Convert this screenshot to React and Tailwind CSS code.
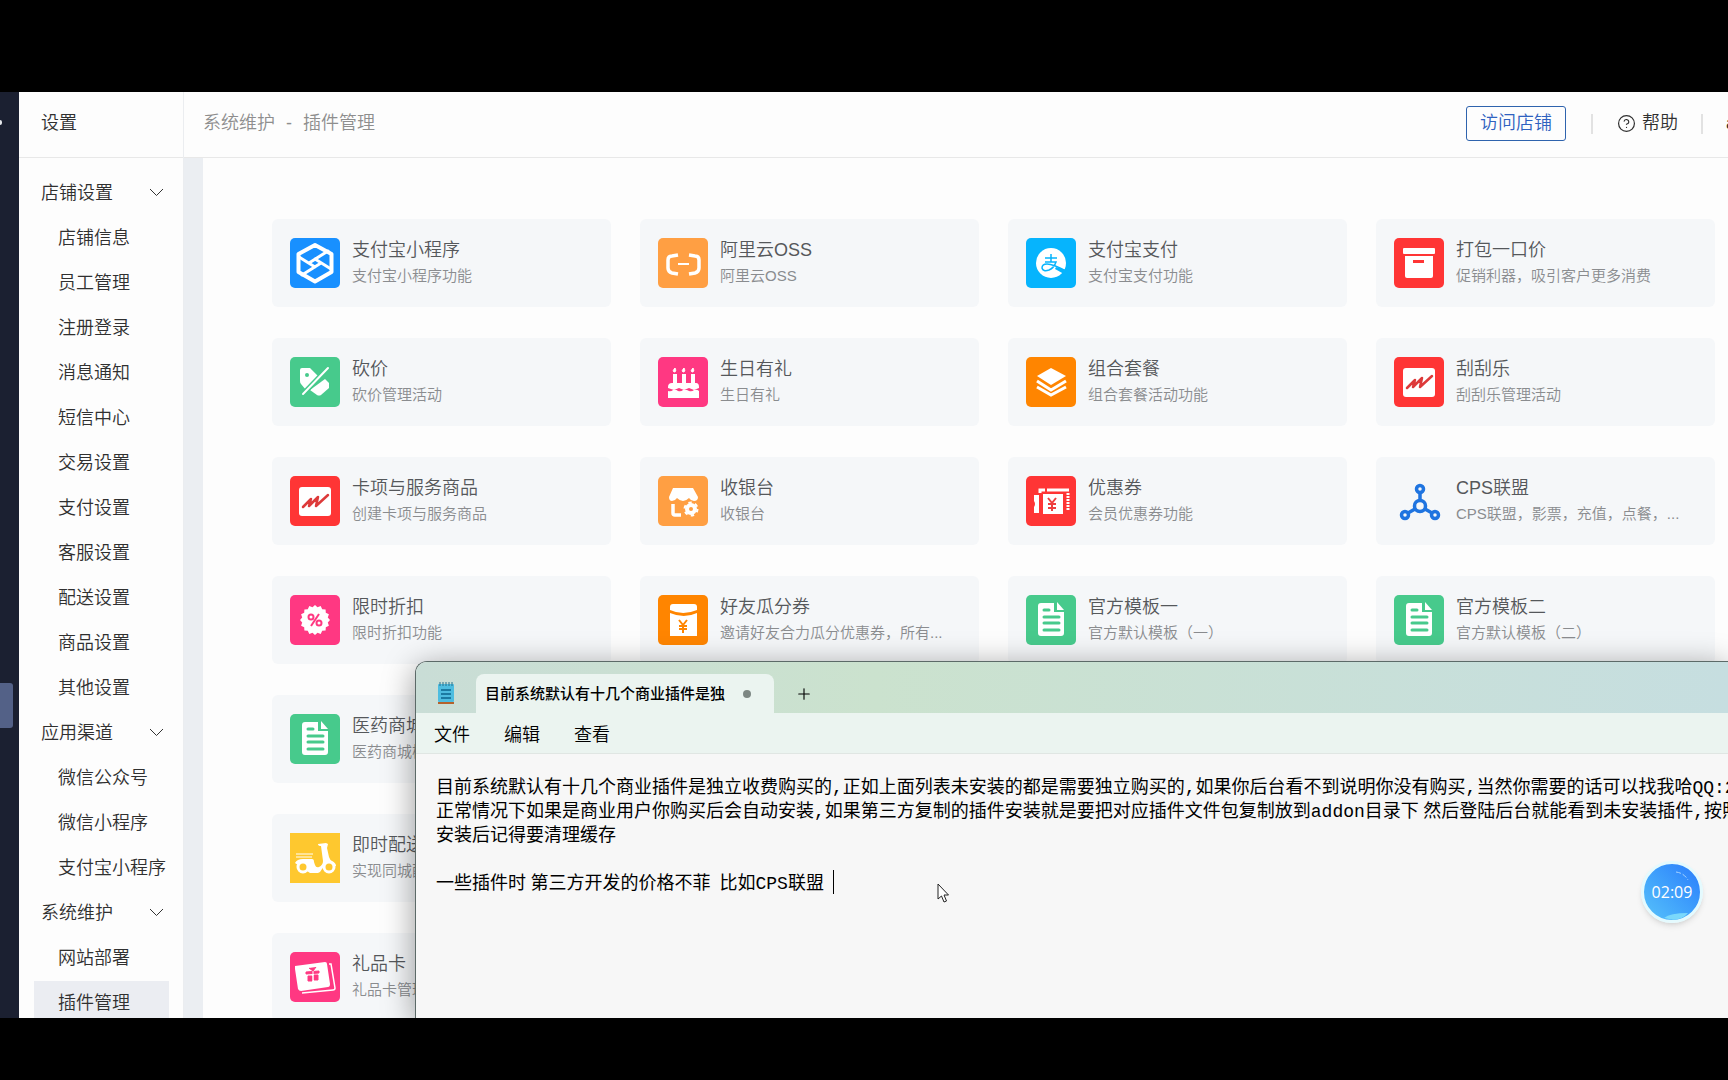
import React, { useState } from 'react';
import { CircleHelp, Plus } from 'lucide-react';

const menuGroups = [
  {
    title: '店铺设置',
    items: ['店铺信息', '员工管理', '注册登录', '消息通知', '短信中心', '交易设置', '支付设置', '客服设置', '配送设置', '商品设置', '其他设置'],
  },
  { title: '应用渠道', items: ['微信公众号', '微信小程序', '支付宝小程序'] },
  { title: '系统维护', items: ['网站部署', '插件管理'] },
];

const plugins = [
  { name: '支付宝小程序', desc: '支付宝小程序功能', icon: 'miniapp' },
  { name: '阿里云OSS', desc: '阿里云OSS', icon: 'oss' },
  { name: '支付宝支付', desc: '支付宝支付功能', icon: 'alipay' },
  { name: '打包一口价', desc: '促销利器，吸引客户更多消费', icon: 'box' },
  { name: '砍价', desc: '砍价管理活动', icon: 'bargain' },
  { name: '生日有礼', desc: '生日有礼', icon: 'cake' },
  { name: '组合套餐', desc: '组合套餐活动功能', icon: 'layers' },
  { name: '刮刮乐', desc: '刮刮乐管理活动', icon: 'scratch' },
  { name: '卡项与服务商品', desc: '创建卡项与服务商品', icon: 'scratch' },
  { name: '收银台', desc: '收银台', icon: 'cashier' },
  { name: '优惠券', desc: '会员优惠券功能', icon: 'coupon' },
  { name: 'CPS联盟', desc: 'CPS联盟，影票，充值，点餐，...', icon: 'cps' },
  { name: '限时折扣', desc: '限时折扣功能', icon: 'discount' },
  { name: '好友瓜分券', desc: '邀请好友合力瓜分优惠券，所有...', icon: 'envelope' },
  { name: '官方模板一', desc: '官方默认模板（一）', icon: 'doc' },
  { name: '官方模板二', desc: '官方默认模板（二）', icon: 'doc' },
  { name: '医药商城', desc: '医药商城模板', icon: 'doc' },
  null,
  null,
  null,
  { name: '即时配送', desc: '实现同城配送', icon: 'scooter' },
  null,
  null,
  null,
  { name: '礼品卡', desc: '礼品卡管理', icon: 'gift' },
];

// \u2005 is a quarter-em space, narrower than a monospace blank
const noteText = [
  '目前系统默认有十几个商业插件是独立收费购买的,正如上面列表未安装的都是需要独立购买的,如果你后台看不到说明你没有购买,当然你需要的话可以找我哈QQ:2',
  '正常情况下如果是商业用户你购买后会自动安装,如果第三方复制的插件安装就是要把对应插件文件包复制放到addon目录下\u2005然后登陆后台就能看到未安装插件,按照',
  '安装后记得要清理缓存',
  '',
  '一些插件时\u2005第三方开发的价格不菲\u2005\u2005比如CPS联盟\u2005',
].join('\n');

const tileColors = {
  miniapp: '#1890ff',
  oss: '#ff9f43',
  alipay: '#06b4fd',
  box: '#ff3535',
  bargain: '#47ca8c',
  cake: '#ff3882',
  layers: '#ff8500',
  scratch: '#ff3535',
  cashier: '#ff9f43',
  coupon: '#ff3535',
  cps: 'none',
  discount: '#ff3882',
  envelope: '#ff8500',
  doc: '#47ca8c',
  scooter: '#fec82f',
  gift: '#ff3882',
};

const starPoints = Array.from({ length: 32 }, (_, i) => {
  const r = i % 2 ? 13 : 15;
  const a = (i * Math.PI) / 16;
  return `${(25 + r * Math.cos(a)).toFixed(1)},${(25 + r * Math.sin(a)).toFixed(1)}`;
}).join(' ');

const glyphs = {
  miniapp: (
    <g fill="none" stroke="#fff" strokeWidth="4" strokeLinejoin="round" strokeLinecap="round">
      <path d="M25 7L41.500 16v18L25 43.500L8.500 34V16z" />
      <path d="M9 19l16 10M25 21l16 10M38 13L19 25M31 25L12 37" strokeWidth="3" />
    </g>
  ),
  oss: (
    <g fill="none" stroke="#fff" strokeWidth="3.500" strokeLinecap="butt">
      <path d="M20 17l-6 1q-4 0-4 4v8q0 4 4 5l6 1M31 17l6 1q4 0 4 4v8q0 4-4 5l-6 1" />
      <path d="M20 26h11" strokeWidth="2" />
    </g>
  ),
  alipay: (
    <>
      <circle cx="25" cy="25" r="15" fill="#fff" />
      <path d="M19 20h12M25 16v8M19 24h11q-2 6-7 8-6 2-7-2 0-4 5-4 6 0 19 7" fill="none" stroke="#06b4fd" strokeWidth="1.500" />
      <path d="M30 29l10 3-2 4-9-5z" fill="#06b4fd" />
    </>
  ),
  box: (
    <>
      <rect x="9" y="10" width="32" height="6" rx="1" fill="#fff" />
      <path d="M11 18h28v20q0 2-2 2H13q-2 0-2-2z" fill="#fff" />
      <rect x="19" y="22" width="11" height="3" fill="#ff3535" />
    </>
  ),
  bargain: (
    <>
      <path d="M10 13q0-2 2-2h8l9 9-13 13-5-6q-1-1-1-3z" fill="#fff" />
      <path d="M35 22l4 4v5l-8 7q-2 1-4 0l-7-5z" fill="#fff" />
      <path d="M38 11L14 36" stroke="#47ca8c" strokeWidth="5" />
      <path d="M38 11L13 37" stroke="#fff" strokeWidth="2" strokeLinecap="round" />
      <circle cx="17" cy="18" r="2" fill="#47ca8c" />
    </>
  ),
  cake: (
    <>
      <path d="M15 17h4v9h5v-9h4v9h5v-9h4v9h1q3 0 3 4v1l-5 2-5-2-5 2-5-2-5 2-6-2v-1q0-4 4-4h1z" fill="#fff" />
      <path d="M10 34q3 1 5-1 3-1 5 1 3 1 5-1 3-1 6 1 3 1 5-1 3-1 5 1v7H10z" fill="#fff" />
      <path d="M17 11q2 4-1 4-2-1 1-4zM26 11q2 4-1 4-2-1 1-4zM35 11q2 4-1 4-2-1 1-4z" fill="#fff" stroke="#fff" />
    </>
  ),
  layers: (
    <>
      <path d="M25 11l15 8-15 9-14-9z" fill="#fff" />
      <path d="M11 24l14 9 15-9M11 30l14 8 15-8" fill="none" stroke="#fff" strokeWidth="3" />
    </>
  ),
  scratch: (
    <>
      <rect x="9" y="11" width="32" height="29" rx="3" fill="#fff" />
      <path d="M13 31l8-8-2 7 9-9-2 9 12-11" fill="none" stroke="#dd3a3a" strokeWidth="2.500" strokeLinejoin="round" strokeLinecap="round" />
    </>
  ),
  cashier: (
    <>
      <path d="M15 12h20l5 9q0 4-4 4-3 0-5-3-3 3-6 3t-6-3q-2 3-5 3-3 0-3-4z" fill="#fff" />
      <path d="M15 28v9q0 2 2 2h6" fill="none" stroke="#fff" strokeWidth="3.500" />
      <circle cx="33" cy="33" r="4" fill="none" stroke="#fff" strokeWidth="4" />
      <circle cx="33" cy="33" r="6.500" fill="none" stroke="#fff" strokeWidth="2" strokeDasharray="3.400 3.400" />
    </>
  ),
  coupon: (
    <>
      <path d="M14 17v-3h5M21 14h22" fill="none" stroke="#fff" strokeWidth="3" />
      <path d="M42 17v17" stroke="#fff" strokeWidth="3" strokeDasharray="2 1" />
      <path d="M8 19h5v18H8v-6q2-3 0-6z" fill="#fff" />
      <path d="M17 18h20v20H17z" fill="#fff" />
      <path d="M22 22l4 5 4-5M26 27v8M22 28h8M22 32h8" fill="none" stroke="#ee3f3f" strokeWidth="2" />
    </>
  ),
  cps: (
    <g fill="none" stroke="#1f74e0" strokeWidth="3.500">
      <circle cx="26" cy="13" r="3.500" />
      <circle cx="26" cy="30" r="5.500" />
      <circle cx="11" cy="39" r="3.500" />
      <circle cx="41" cy="39" r="3.500" />
      <path d="M26 17v8M21 33l-7 4M31 33l7 4" />
    </g>
  ),
  discount: (
    <>
      <polygon points={starPoints} fill="#fff" />
      <g fill="none" stroke="#ff3882" strokeWidth="2">
        <circle cx="21" cy="22" r="2.500" />
        <circle cx="29" cy="28" r="2.500" />
        <path d="M29 19l-8 12" />
      </g>
    </>
  ),
  envelope: (
    <>
      <path d="M12 12q0-3 3-3h21q3 0 3 3v3q-14 6-27 0z" fill="#fff" />
      <path d="M12 18q14 6 27 0v23H12z" fill="#fff" />
      <path d="M21 25l4 5 4-5M25 30v8M21 31h8M21 34h8" fill="none" stroke="#ff8500" strokeWidth="2" />
    </>
  ),
  doc: (
    <>
      <path d="M15 8h13v9h10v21q0 3-3 3H15q-3 0-3-3V11q0-3 3-3z" fill="#fff" />
      <path d="M31 7l7 8h-7z" fill="#fff" />
      <path d="M18 15h5M18 22h15M18 28h15M18 35h15" stroke="#47ca8c" strokeWidth="3" strokeLinecap="round" />
    </>
  ),
  scooter: (
    <>
      <path d="M6 21h17M6 24h16" stroke="#fff" strokeWidth="1" />
      <path d="M5 30q2-4 8-4h9q2 0 2 3l1 3q1 3 4 2 4-2 4-6l-2-15q-3 0-3-2l8-1 2 1-1 4 2 9q1 3 3 4 4 2 4 5H34l-4 6-2 1h-8z" fill="#fff" />
      <circle cx="13" cy="34" r="5" fill="#fec82f" stroke="#fff" strokeWidth="3" />
      <circle cx="39" cy="34" r="5" fill="#fec82f" stroke="#fff" strokeWidth="3" />
    </>
  ),
  gift: (
    <>
      <path d="M5 14l30-4q2 0 2 2l3 20q0 3-2 3L11 39q-2 0-3-2L5 17z" fill="#fff" />
      <path d="M39 12l2 0 4 24q0 2-2 2l-31 3" fill="none" stroke="#fff" strokeWidth="1.500" />
      <path d="M16 20l13-1v2l-13 1zM18 24l4 0v5h-4zM24 23h4v5h-4zM19 16l4 3 3-4" fill="#ff3882" stroke="#ff3882" />
      <path d="M23 19v11" stroke="#fff" />
    </>
  ),
};

const PluginIcon = ({ name }) => (
  <svg viewBox="0 0 50 50" className="size-[50px] shrink-0" aria-hidden="true">
    <rect width="50" height="50" rx={name === 'scooter' ? 0 : 5} fill={tileColors[name]} />
    {glyphs[name]}
  </svg>
);

const PluginCard = ({ plugin }) => (
  <a href="#" className="flex h-[88px] items-center gap-[12px] rounded-md bg-[#f5f7f9] px-[18px]">
    {plugin && (
      <>
        <PluginIcon name={plugin.icon} />
        <div className="min-w-0 whitespace-nowrap leading-[26px]">
          <div className="text-[18px] text-[#55585b]">{plugin.name}</div>
          <div className="text-[15px] text-[#8a8c8f]">{plugin.desc}</div>
        </div>
      </>
    )}
  </a>
);

const Rail = () => (
  <nav className="w-[19px] shrink-0 bg-[#1b2031]">
    <div className="mt-7 h-[5px] w-[2px] rounded-r-full bg-gray-200" />
    <div className="mt-[558px] h-[45px] w-[13px] rounded-r-[3px] bg-[#536187]" />
  </nav>
);

const SideMenu = () => {
  const [active, setActive] = useState('插件管理');

  return (
    <aside className="w-[165px] shrink-0 border-r border-[#ebedf0] text-[18px] text-[#303030]">
      <div className="flex h-[66px] items-center border-b border-[#e8e8e8] pl-[22px] pb-[2px]">设置</div>
      <div className="pt-[13px]">
        {menuGroups.map((group) => (
          <div key={group.title}>
            <button className="flex h-[45px] w-full items-center justify-between pl-[22px] pr-[19px]">
              {group.title}
              <svg viewBox="0 0 15 11" className="h-[11px] w-[15px]" fill="none" stroke="#333">
                <path d="M1 1l6.500 6.500L14 1" />
              </svg>
            </button>
            {group.items.map((item) => (
              <button
                key={item}
                onClick={() => setActive(item)}
                className={`mx-[15px] flex h-[45px] w-[135px] items-center whitespace-nowrap pl-[24px] ${active === item ? 'bg-[#ebedf2]' : ''}`}
              >
                {item}
              </button>
            ))}
          </div>
        ))}
      </div>
    </aside>
  );
};

const Header = () => (
  <header className="flex h-[66px] shrink-0 items-center overflow-hidden border-b border-[#e8e8e8] pb-[2px] pl-[19px] text-[18px] text-[#303030]">
    <div className="flex gap-[11px] text-[#8e8e8e]">
      <span>系统维护</span>
      <span>-</span>
      <span>插件管理</span>
    </div>
    <div className="ml-auto flex items-center">
      <button className="h-[35px] w-[100px] rounded-[3px] border border-[#2f63ad] text-[#2f62c0]">访问店铺</button>
      <div className="ml-[25px] h-5 w-[2px] bg-[#e2e2e2]" />
      <a href="#" className="ml-[24px] flex items-center gap-[6px]">
        <CircleHelp size={19} strokeWidth={1.5} />
        帮助
      </a>
      <div className="ml-[23px] h-5 w-[2px] bg-[#e2e2e2]" />
      <span className="ml-[23px] w-[2px] overflow-hidden">a</span>
    </div>
  </header>
);

const Notepad = () => {
  const [text, setText] = useState(noteText);

  return (
    <section className="absolute top-[569px] right-0 bottom-0 left-[415px] flex flex-col overflow-hidden rounded-tl-xl border-t border-l border-[#5c6a68] bg-[#f7f7f7] text-black shadow-[0_6px_32px_rgba(0,0,0,0.4)]">
      <div className="flex h-[51px] shrink-0 items-end bg-linear-to-r from-[#c9ddd6] via-[#cbe2ce] via-35% to-[#c6dee0]">
        <svg viewBox="0 0 18 22" className="mb-[9px] ml-[21px] h-[22px] w-[18px]">
          <rect x="1" y="2" width="16" height="18" rx="1" fill="#4ebde0" />
          <path d="M3 0v4M6 0v4M9 0v4M12 0v4M15 0v4" stroke="#27708c" />
          <path d="M4 8h10M4 12h10M4 16h10" stroke="#0d668d" strokeWidth="1.500" />
          <path d="M1 21h16" stroke="#b5622c" strokeWidth="2" />
        </svg>
        <div className="ml-[21px] flex h-[39px] w-[298px] items-center rounded-t-lg bg-[#ebf4f0] pl-[9px]">
          <span className="w-[242px] overflow-hidden whitespace-nowrap pt-[2px] text-[15px] font-medium">目前系统默认有十几个商业插件是独</span>
          <span className="ml-[16px] size-2 rounded-full bg-[#7d8783]" />
        </div>
        <button className="mb-[10px] ml-[21px]" aria-label="新建标签页">
          <Plus size={18} strokeWidth={1.5} />
        </button>
      </div>
      <div className="flex h-[41px] shrink-0 items-center gap-[34px] border-b border-[#e0e6e3] bg-[#ebf4f0] pt-[4px] pl-[18px] text-[18px]">
        <button>文件</button>
        <button>编辑</button>
        <button>查看</button>
      </div>
      <textarea
        aria-label="文本编辑器"
        wrap="off"
        spellCheck={false}
        value={text}
        onChange={(e) => setText(e.target.value)}
        className="block w-full flex-1 resize-none overflow-hidden bg-transparent pt-[22px] pl-[20px] font-['Liberation_Mono','Noto_Sans_CJK_SC',monospace] text-[18px] leading-[24px] font-normal outline-none"
      />
      <div className="absolute top-[208px] left-[417px] h-6 w-px bg-black" />
    </section>
  );
};

const TimerBadge = () => (
  <div className="absolute top-[769px] right-[25px] flex size-[62px] items-center justify-center overflow-hidden rounded-full border-3 border-[#e4fafe] bg-linear-to-bl from-[#2c7bfb] to-[#58c2fa] font-['Open_Sans',sans-serif] text-[16px] font-normal text-white shadow-md">
    <svg viewBox="0 0 56 56" className="absolute inset-0" fill="none">
      <path d="M32 8q8 1 12 8" stroke="#a9d4ff" strokeDasharray="5 2" />
      <path d="M20 54q6-5 24-5-6 7-14 7z" fill="#7ad8fb" />
    </svg>
    <span className="relative">02:09</span>
  </div>
);

export default function App() {
  return (
    <div className="flex h-screen flex-col bg-black pt-[92px] pb-[62px] font-['Liberation_Sans','Noto_Sans_CJK_SC',sans-serif] font-[350]">
      <div className="relative flex min-h-0 flex-1 overflow-hidden bg-[#fdfdfd]">
        <Rail />
        <SideMenu />
        <div className="flex min-w-0 flex-1 flex-col">
          <Header />
          <main className="min-h-0 flex-1 border-l-[19px] border-[#ebeef2] pt-[61px] pr-[13px] pl-[69px]">
            <div className="grid grid-cols-4 gap-x-[29px] gap-y-[31px]">
              {plugins.map((plugin, i) => (
                <PluginCard key={i} plugin={plugin} />
              ))}
            </div>
          </main>
        </div>
        <Notepad />
        <TimerBadge />
        <svg viewBox="0 0 12 20" className="absolute top-[791px] left-[937px] h-5 w-3" fill="#fff" stroke="#222">
          <path d="M1 1v15l3.500-3 2.500 6 2.500-1-2.500-6h4.500z" />
        </svg>
      </div>
    </div>
  );
}
